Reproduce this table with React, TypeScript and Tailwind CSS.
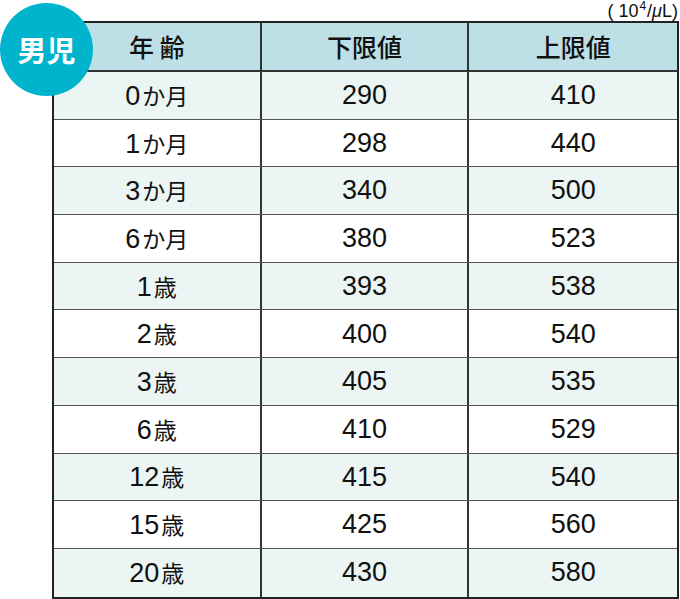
const rows: [string, string, string, string][] = [
  ['0', 'か月', '290', '410'],
  ['1', 'か月', '298', '440'],
  ['3', 'か月', '340', '500'],
  ['6', 'か月', '380', '523'],
  ['1', '歳', '393', '538'],
  ['2', '歳', '400', '540'],
  ['3', '歳', '405', '535'],
  ['6', '歳', '410', '529'],
  ['12', '歳', '415', '540'],
  ['15', '歳', '425', '560'],
  ['20', '歳', '430', '580'],
];

const cjk = { fontFamily: '"Noto Sans CJK JP", sans-serif' };

export default function App() {
  return (
    <div
      className="relative w-[680px] h-[599px] bg-white text-[#111]"
      style={{ fontFamily: '"Liberation Sans", "Noto Sans CJK JP", sans-serif' }}
    >
      <div className="flex justify-end items-baseline h-[21px] pt-[1px] pr-[2px] text-[18px] leading-[20px] whitespace-nowrap">
        <span className="mr-[5px]">(</span>
        <span>10</span>
        <span className="text-[12px] relative -top-[7px] ml-[1px]">4</span>
        <span className="ml-[1px]">/</span>
        <span className="italic">μ</span>
        <span>L</span>
        <span>)</span>
      </div>

      <div className="ml-[52px] w-[627px] border-2 border-[#222]">
        <div
          className="grid grid-cols-3 h-[49px] bg-[#bde0e7] border-b-2 border-[#333] text-[25px] font-medium"
          style={cjk}
        >
          <div className="flex items-center justify-center border-r-2 border-[#333]">年&nbsp;齢</div>
          <div className="flex items-center justify-center border-r-2 border-[#333]">下限値</div>
          <div className="flex items-center justify-center">上限値</div>
        </div>
        {rows.map(([n, unit, lo, hi], i) => (
          <div
            key={n + unit}
            className={`grid grid-cols-3 h-[47.7px] text-[27px] ${
              i % 2 === 0 ? 'bg-[#ebf5f4]' : 'bg-white'
            } ${i < rows.length - 1 ? 'border-b border-[#555]' : ''}`}
          >
            <div className="flex items-center justify-center border-r-2 border-[#333]">
              <span className="leading-[30px] whitespace-nowrap">
                {n}
                <span className="text-[23px] ml-[2px]" style={cjk}>
                  {unit}
                </span>
              </span>
            </div>
            <div className="flex items-center justify-center border-r-2 border-[#333]">{lo}</div>
            <div className="flex items-center justify-center">{hi}</div>
          </div>
        ))}
      </div>

      <div className="absolute left-0 top-[3px] w-[93px] h-[93px] rounded-full bg-[#00b4cd] flex items-center justify-center">
        <span className="text-white font-bold text-[29px] leading-none" style={cjk}>
          男児
        </span>
      </div>
    </div>
  );
}
